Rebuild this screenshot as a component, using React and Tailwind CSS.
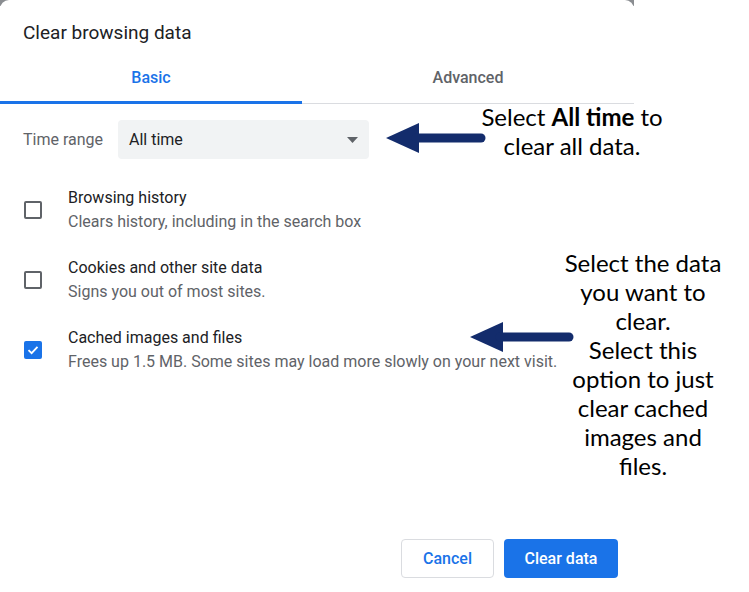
import React from "react";

const rows = [
  { title: "Browsing history", desc: "Clears history, including in the search box", checked: false },
  { title: "Cookies and other site data", desc: "Signs you out of most sites.", checked: false },
  {
    title: "Cached images and files",
    desc: "Frees up 1.5 MB. Some sites may load more slowly on your next visit.",
    checked: true,
  },
];

function Checkbox({ checked }) {
  if (checked) {
    return (
      <div className="w-[18px] h-[18px] rounded-[2px] bg-[#1a73e8] flex items-center justify-center shrink-0">
        <svg width="14" height="14" viewBox="0 0 14 14">
          <path d="M2.5 7.2 L5.6 10.2 L11.5 3.8" fill="none" stroke="#fff" strokeWidth="1.8" />
        </svg>
      </div>
    );
  }
  return <div className="w-[18px] h-[18px] rounded-[2px] border-2 border-[#5f6368] shrink-0" />;
}

// navy annotation arrow pointing left
function Arrow({ width }) {
  return (
    <svg width={width} height="32" viewBox={`0 0 ${width} 32`}>
      <polygon points="0,16 33,1 33,31" fill="#132c6c" />
      <line x1="30" y1="16" x2={width - 5} y2="16" stroke="#132c6c" strokeWidth="9" strokeLinecap="round" />
    </svg>
  );
}

export default function App() {
  return (
    <div className="relative w-[749px] h-[592px] bg-white overflow-hidden font-['Roboto',sans-serif]">
      {/* grey backdrop peeking past the dialog's rounded top corners */}
      <div className="absolute top-0 left-0 w-[634px] h-[6px] bg-[#8a8d91]" />

      <div className="relative w-[634px] h-[592px] bg-white rounded-t-[9px] flex flex-col">
        <div className="h-[55px] pt-[20px] pl-[23px] text-[19px] leading-[26px] text-[#202124]">
          Clear browsing data
        </div>

        <div className="flex h-[49px] border-b border-[#dadce0]">
          <div className="relative w-[302px] flex items-center justify-center pb-[3px] text-[16px] font-medium text-[#1a73e8]">
            Basic
            <div className="absolute left-0 right-0 bottom-[-1px] h-[3px] bg-[#1a73e8]" />
          </div>
          <div className="flex-1 flex items-center justify-center pb-[3px] text-[16px] font-medium text-[#5f6368]">
            Advanced
          </div>
        </div>

        <div className="mt-[16px] flex items-center pl-[23px]">
          <span className="w-[95px] text-[16px] text-[#5f6368]">Time range</span>
          <div className="w-[251px] h-[39px] rounded-[4px] bg-[#f1f3f4] flex items-center justify-between pl-[11px] pr-[11px]">
            <span className="text-[16px] text-[#202124]">All time</span>
            <svg width="11" height="6" viewBox="0 0 11 6">
              <polygon points="0,0 11,0 5.5,6" fill="#5f6368" />
            </svg>
          </div>
        </div>

        <div className="mt-[27px] flex flex-col gap-[22px]">
          {rows.map((r) => (
            <div key={r.title} className="h-[48px] flex items-center pl-[24px]">
              <Checkbox checked={r.checked} />
              <div className="ml-[26px] flex flex-col text-[16px] leading-[24px]">
                <span className="text-[#202124]">{r.title}</span>
                <span className="text-[#5f6368]">{r.desc}</span>
              </div>
            </div>
          ))}
        </div>

        <div className="mt-auto mb-[14px] pr-[16px] flex justify-end gap-[10px]">
          <button className="w-[93px] h-[39px] rounded-[4px] border border-[#dadce0] bg-white text-[16px] font-medium text-[#1a73e8]">
            Cancel
          </button>
          <button className="w-[114px] h-[39px] rounded-[4px] bg-[#1a73e8] text-[16px] font-medium text-white">
            Clear data
          </button>
        </div>
      </div>

      {/* annotations */}
      <div className="absolute left-[386px] top-[122px]">
        <Arrow width={100} />
      </div>
      <div className="absolute left-[452px] top-[102px] w-[240px] text-center font-['Lato',sans-serif] text-[24px] leading-[29px] text-black">
        Select <b className="font-bold">All time</b> to
        <br />
        clear all data.
      </div>

      <div className="absolute left-[470px] top-[321px]">
        <Arrow width={104} />
      </div>
      <div className="absolute left-[542px] top-[248px] w-[202px] text-center font-['Lato',sans-serif] text-[24px] leading-[29px] text-black">
        Select the data
        <br />
        you want to
        <br />
        clear.
        <br />
        Select this
        <br />
        option to just
        <br />
        clear cached
        <br />
        images and
        <br />
        files.
      </div>
    </div>
  );
}
